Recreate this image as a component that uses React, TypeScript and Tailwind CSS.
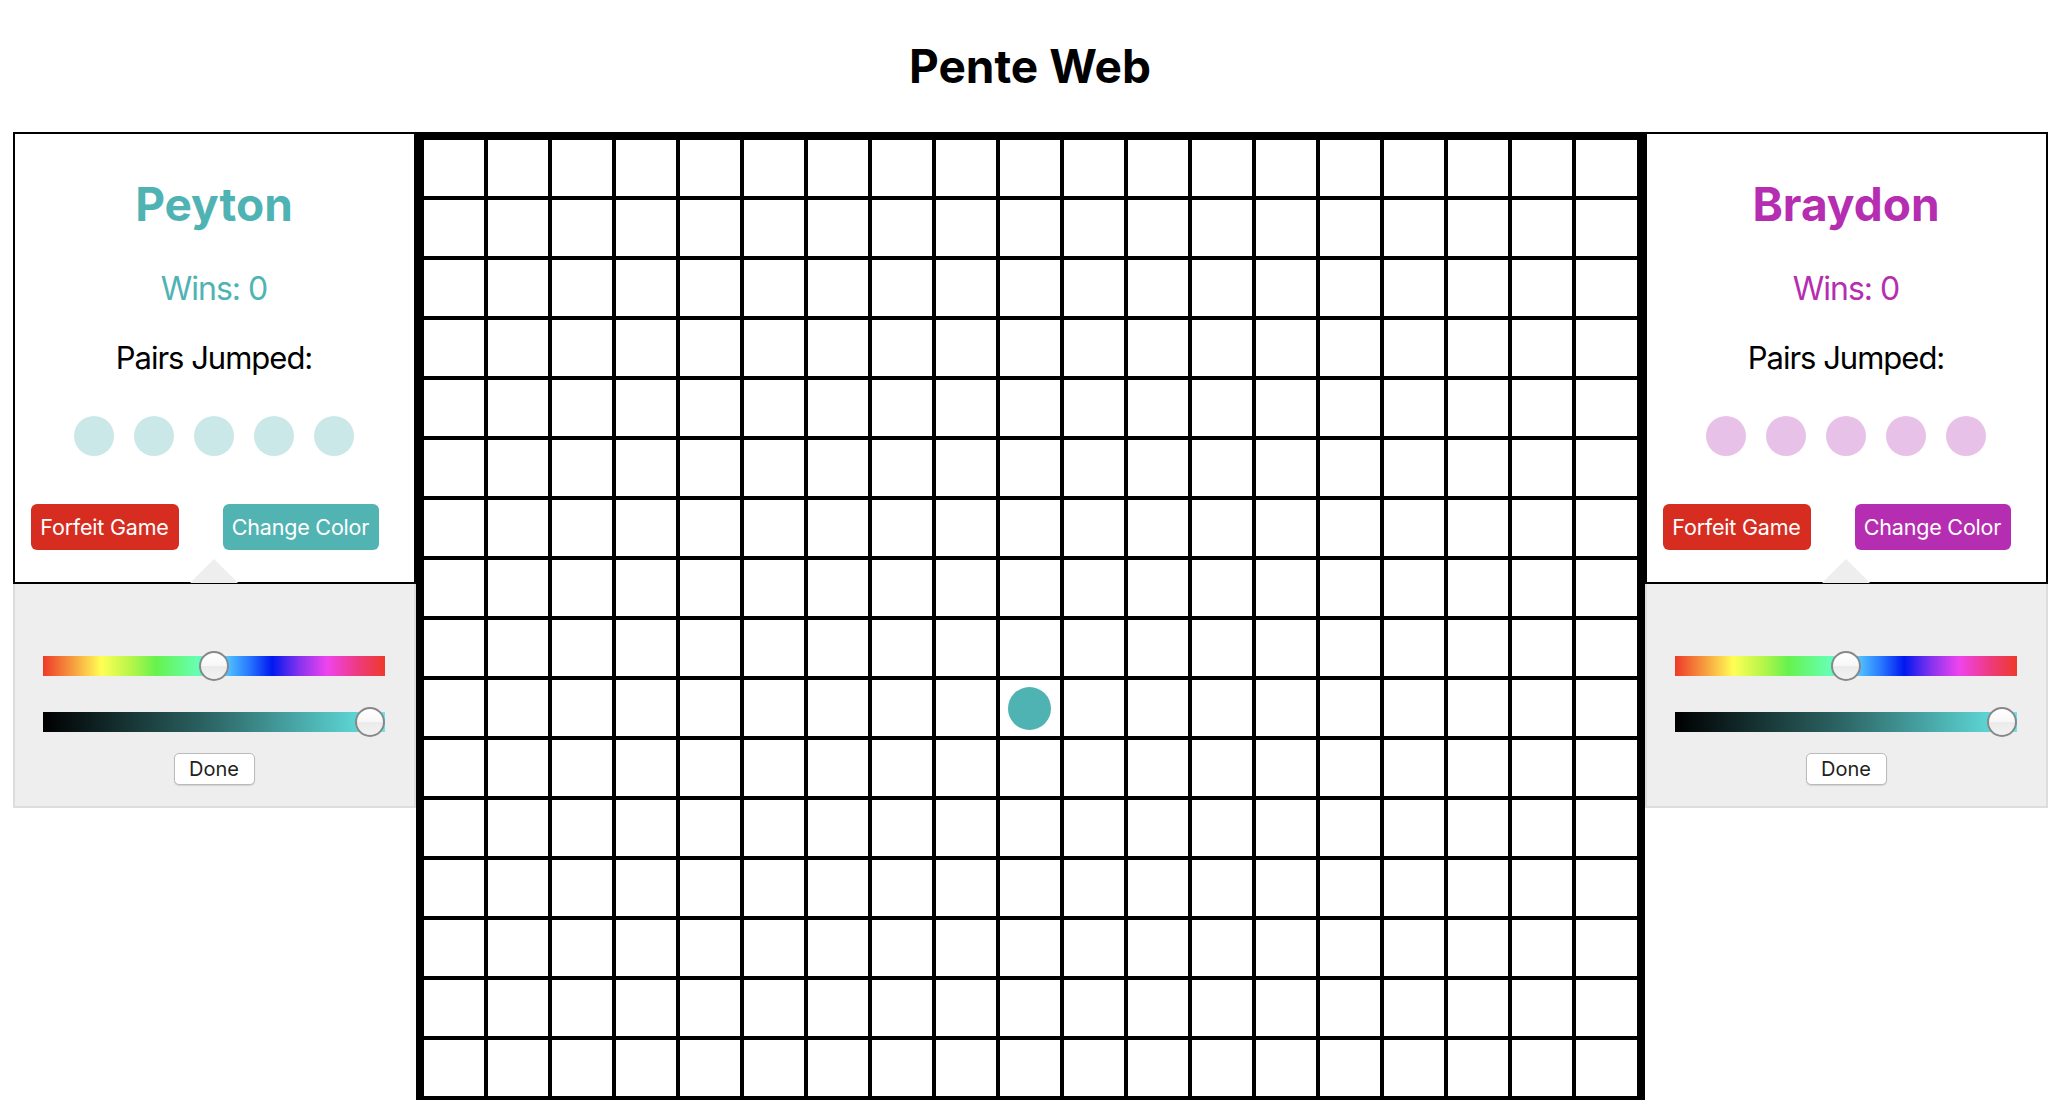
import React from 'react';

const SIZE = 19;

interface PlayerPanelProps {
  name: string;
  textColor: string;
  buttonBg: string;
  dotBg: string;
}

function PlayerPanel({ name, textColor, buttonBg, dotBg }: PlayerPanelProps) {
  return (
    <div className="w-[403px] flex flex-col">
      <div className="h-[452px] border-2 border-black bg-white flex flex-col items-center">
        <h2 className={`mt-[47px] text-[46px] leading-[46px] font-bold ${textColor}`}>{name}</h2>
        <p className={`mt-[46px] text-[32px] leading-[32px] tracking-[-1px] ${textColor}`}>Wins: 0</p>
        <p className="mt-[37px] text-[31px] leading-[31px] tracking-[-1px] text-black">Pairs Jumped:</p>
        <div className="mt-[43px] flex gap-[20px]">
          {[0, 1, 2, 3, 4].map((i) => (
            <div key={i} className={`w-[40px] h-[40px] rounded-full ${dotBg}`} />
          ))}
        </div>
        <div className="mt-[48px] self-stretch pl-[16px] flex gap-[44px]">
          <button className="h-[46px] w-[148px] rounded-[6px] bg-[#d62d20] text-white text-[21.5px] tracking-[-0.2px]">
            Forfeit Game
          </button>
          <button className={`h-[46px] w-[156px] rounded-[6px] text-white text-[21.5px] tracking-[-0.2px] ${buttonBg}`}>
            Change Color
          </button>
        </div>
      </div>

      <div className="relative h-[224px] bg-[#eeeeee] border-x-2 border-b-2 border-[#dddddd] flex flex-col items-center">
        <div className="absolute -top-[25px] left-1/2 -translate-x-1/2 w-0 h-0 border-x-[24px] border-x-transparent border-b-[24px] border-b-[#eeeeee]" />
        <div className="relative mt-[72px] w-[342px] h-[20px] bg-[linear-gradient(to_right,#ee3a2a,#f7a040_9%,#ffff55_17%,#b4f54a_26%,#66f24d_33%,#66ffb0_45%,#55ccff_53%,#2a7bff_60%,#0018f0_67%,#8833ee_75%,#ee44ee_83%,#ee3a80_92%,#ee3a2a)]">
          <div className="absolute left-1/2 top-1/2 -translate-x-1/2 -translate-y-1/2 w-[30px] h-[30px] rounded-full border-2 border-[#888888] bg-[linear-gradient(to_bottom,#ffffff,#f7f7f7_50%,#ebebeb_52%,#f2f2f2)]" />
        </div>
        <div className="relative mt-[36px] w-[342px] h-[20px] bg-[linear-gradient(to_right,#000000,#2e6868_50%,#66eaea)]">
          <div className="absolute right-0 top-1/2 -translate-y-1/2 w-[30px] h-[30px] rounded-full border-2 border-[#888888] bg-[linear-gradient(to_bottom,#ffffff,#f7f7f7_50%,#ebebeb_52%,#f2f2f2)]" />
        </div>
        <button className="mt-[21px] h-[32px] w-[81px] rounded-[5px] bg-white border border-[#bbbbbb] shadow-[0_1px_1px_rgba(0,0,0,0.12)] text-[20px] leading-[20px] text-[#222222]">
          Done
        </button>
      </div>
    </div>
  );
}

function Board() {
  const cells = [];
  for (let r = 0; r < SIZE; r++) {
    for (let c = 0; c < SIZE; c++) {
      const hasStone = r === 9 && c === 9;
      cells.push(
        <div key={`${r}-${c}`} className="h-[60px] border-2 border-black flex items-center justify-center">
          {hasStone && <div className="w-[43px] h-[43px] rounded-full bg-[#50b3b3]" />}
        </div>
      );
    }
  }
  return (
    <div className="w-[1229px] border-[6px] border-black bg-white grid grid-cols-[repeat(19,minmax(0,1fr))]">
      {cells}
    </div>
  );
}

export default function App() {
  return (
    <div className="min-h-screen bg-white font-['Inter','Liberation_Sans',sans-serif]">
      <h1 className="pt-[43px] mb-[43px] text-center text-[46px] leading-[46px] font-bold text-black">Pente Web</h1>
      <div className="flex justify-center items-start">
        <PlayerPanel
          name="Peyton"
          textColor="text-[#4fb3b3]"
          buttonBg="bg-[#52b3b3]"
          dotBg="bg-[#cbe8e8]"
        />
        <Board />
        <PlayerPanel
          name="Braydon"
          textColor="text-[#b52db0]"
          buttonBg="bg-[#b52db0]"
          dotBg="bg-[#e8c1e8]"
        />
      </div>
    </div>
  );
}
